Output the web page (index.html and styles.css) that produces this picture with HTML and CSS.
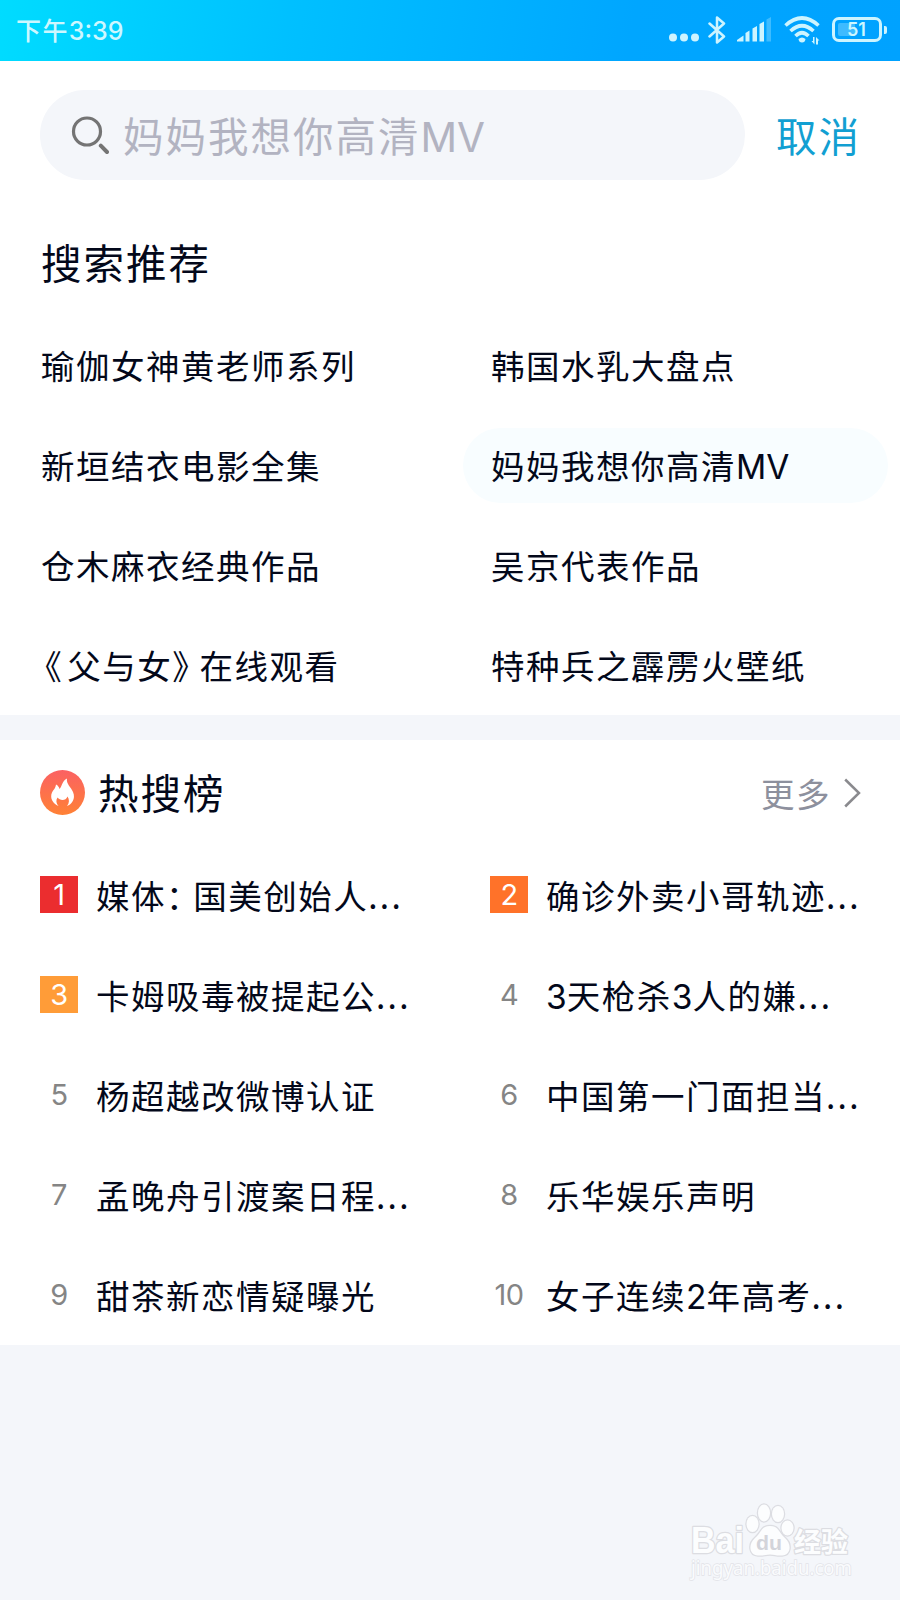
FILE: index.html
```html
<!DOCTYPE html>
<html lang="zh-CN">
<head>
  <meta charset="UTF-8" />
  <title>搜索</title>
  <meta name="viewport" content="width=device-width, initial-scale=1.0" />
  <link rel="stylesheet" href="styles.css">
</head>
<body>

  <div class="status-bar">
    <div class="time">下午<span class="en">3:39</span></div>
    <div class="status-icons">
      <svg class="ic-dots" width="30" height="30" viewBox="0 0 30 30">
        <circle cx="4" cy="22.500" r="4"/><circle cx="15" cy="22.500" r="4"/><circle cx="26" cy="22.500" r="4"/>
      </svg>
      <svg class="ic-bt" width="18" height="30" viewBox="0 0 18 30">
        <path d="M1.500 8.500 L16 21.500 L9 27.500 V2.500 L16 8.500 L1.500 21.500" fill="none" stroke="#cdf4ff" stroke-width="2.500" stroke-linejoin="round" stroke-linecap="round"/>
      </svg>
      <svg class="ic-signal" width="34" height="30" viewBox="0 0 34 30">
        <path d="M0 26.500 V25 L6.500 20.500 V26.500Z"/>
        <path d="M8.500 26.500 V18 L12.500 15.500 V26.500Z"/>
        <path d="M15.500 26.500 V13.500 L20 11 V26.500Z"/>
        <path d="M22.500 26.500 V9 L27 6.500 V26.500Z"/>
        <path d="M29.500 26.500 V4.500 L34 2 V26.500Z" opacity=".3"/>
      </svg>
      <svg class="ic-wifi" width="36" height="30" viewBox="0 0 36 30">
        <g fill="none" stroke="#cdf4ff" stroke-width="3.600">
          <path d="M1.500 10.500 Q18 -4.500 34.500 10.500"/>
          <path d="M6.500 16 Q18 5.500 29.500 16"/>
          <path d="M11.500 21 Q18 14.500 24.500 21"/>
        </g>
        <path d="M14.500 24 Q18 21 21.500 24 Q21 27.500 18 27.500 Q15 27.500 14.500 24Z"/>
        <path d="M30.500 22 V29.500 L27.500 26 H29 V22Z M32 29.500 V22 L35.500 25.500 H34 V29.500Z"/>
      </svg>
      <div class="battery"><span class="en">51</span></div>
    </div>
  </div>

  <div class="panel">
    <div class="search-row">
      <div class="search-box">
        <svg width="38" height="40" viewBox="0 0 38 40">
          <g fill="none" stroke="#747474">
            <circle cx="16" cy="16.500" r="13.500" stroke-width="3.200"/>
            <path d="M29.800 30.700 L36 37" stroke-width="4" stroke-linecap="round"/>
          </g>
        </svg>
        <div class="keyword">妈妈我想你高清<span class="en">MV</span></div>
      </div>
      <div class="cancel">取消</div>
    </div>

    <div class="title">搜索推荐</div>
    <div class="grid">
      <div class="item"><p>瑜伽女神黄老师系列</p></div>
      <div class="item"><p>韩国水乳大盘点</p></div>
      <div class="item"><p>新垣结衣电影全集</p></div>
      <div class="item active"><p>妈妈我想你高清<span class="en">MV</span></p></div>
      <div class="item"><p>仓木麻衣经典作品</p></div>
      <div class="item"><p>吴京代表作品</p></div>
      <div class="item"><p><span class="open">《</span>父与女<span class="close">》</span>在线观看</p></div>
      <div class="item"><p>特种兵之霹雳火壁纸</p></div>
    </div>
  </div>

  <div class="panel hot">
    <div class="hot-header">
      <svg class="fire" width="45" height="45" viewBox="0 0 45 45">
        <defs>
          <linearGradient id="fireBg" x1="0" y1="0" x2="0" y2="1">
            <stop offset="0" stop-color="#fb6163"/>
            <stop offset="1" stop-color="#ff8135"/>
          </linearGradient>
        </defs>
        <circle cx="22.500" cy="22.500" r="22.500" fill="url(#fireBg)"/>
        <path fill="#fff" d="M18.500 36 C13 34 9.500 28 12 22.500 C13.500 19.500 15.500 18.500 16 14.500 C18 15.500 19 17 19.500 19 C22 16.500 22 11 27 8.500 C26 14 31 17 33 22 C36 29 31.500 34.500 27 36 C29.500 33 29.500 29.500 27.500 26.500 C26 31 20 31 17.500 27.500 C15.800 30 16 33.500 18.500 36Z"/>
      </svg>
      <div class="title">热搜榜</div>
      <div class="more">更多</div>
      <svg width="17" height="30" viewBox="0 0 17 30">
        <path d="M1.200 1.500 L15 15 L1.200 28.500" fill="none" stroke="#8a8a8e" stroke-width="2.500"/>
      </svg>
    </div>
    <div class="grid">
      <div class="item"><b class="rank r1">1</b><p>媒体<span class="colon">：</span>国美创始人<i>...</i></p></div>
      <div class="item"><b class="rank r2">2</b><p>确诊外卖小哥轨迹<i>...</i></p></div>
      <div class="item"><b class="rank r3">3</b><p>卡姆吸毒被提起公<i>...</i></p></div>
      <div class="item"><b class="rank">4</b><p><span class="en">3</span>天枪杀<span class="en">3</span>人的嫌<i>...</i></p></div>
      <div class="item"><b class="rank">5</b><p>杨超越改微博认证</p></div>
      <div class="item"><b class="rank">6</b><p>中国第一门面担当<i>...</i></p></div>
      <div class="item"><b class="rank">7</b><p>孟晚舟引渡案日程<i>...</i></p></div>
      <div class="item"><b class="rank">8</b><p>乐华娱乐声明</p></div>
      <div class="item"><b class="rank">9</b><p>甜茶新恋情疑曝光</p></div>
      <div class="item"><b class="rank">10</b><p>女子连续<span class="en">2</span>年高考<i>...</i></p></div>
    </div>
  </div>

  <svg class="watermark" width="180" height="100" viewBox="0 0 180 100">
    <g fill="#fcfdfe" stroke="#dcdde2" stroke-width="2.500" paint-order="stroke" stroke-linejoin="round">
      <text class="wm-bai" x="10" y="62" textLength="53" lengthAdjust="spacingAndGlyphs">Bai</text>
      <ellipse cx="71.500" cy="33" rx="6" ry="8"/>
      <ellipse cx="83" cy="22" rx="6" ry="8.500"/>
      <ellipse cx="97" cy="23" rx="6" ry="8"/>
      <ellipse cx="106.500" cy="37" rx="6" ry="7.500"/>
      <path d="M89 35 C80 35 81 41 74 47 C67 53 68 64 77 64.500 C83 65 84 63.500 89 63.500 C94 63.500 95 65 101 64.500 C110 64 111 53 104 47 C97 41 98 35 89 35Z"/>
      <text class="wm-cjk" x="113" y="61">经验</text>
    </g>
    <text class="wm-du" x="75" y="59" textLength="26" lengthAdjust="spacingAndGlyphs">du</text>
    <text class="wm-url" x="10" y="84" textLength="161" lengthAdjust="spacingAndGlyphs">jingyan.baidu.com</text>
  </svg>

</body>
</html>
```
FILE: styles.css
```css
body {
  position: relative;
  min-height: 1600px;
  margin: 0;
  background-color: #f4f6fa;
  color: #03081a;
  font-family: "Noto Sans CJK SC", sans-serif;
}
.en {
  font-family: Inter, sans-serif;
  letter-spacing: 0;
  line-height: 0;
}

.status-bar {
  display: flex;
  justify-content: space-between;
  box-sizing: border-box;
  height: 61px;
  padding: 0 14px 0 16px;
  background: linear-gradient(100deg, #00dcff 0%, #00c0ff 32%, #00a6ff 70%, #00a2ff 100%);
  color: #cdf7ff;
}
.time {
  font-size: 25px;
  font-weight: 500;
  line-height: 59px;
  letter-spacing: 1.4px;
}
.status-icons {
  display: flex;
  align-items: flex-start;
  padding-top: 15px;
}
.status-icons svg {
  fill: #cdf4ff;
}
.ic-bt {
  margin-left: 9px;
}
.ic-signal {
  margin-left: 11px;
}
.ic-wifi {
  margin-left: 13px;
}
.battery {
  display: flex;
  position: relative;
  box-sizing: border-box;
  width: 50px;
  height: 25px;
  margin: 2px 4px 0 12px;
  padding: 3px;
  border: 3px solid #cdf4ff;
  border-radius: 7px;
}
.battery::before {
  content: "";
  width: 17px;
  height: 13px;
  border-radius: 2px;
  background: rgba(205, 244, 255, 0.3);
}
.battery::after {
  content: "";
  position: absolute;
  top: 6px;
  right: -8px;
  width: 3px;
  height: 8px;
  border-radius: 0 2px 2px 0;
  background: #cdf4ff;
}
.battery span {
  margin-left: -8px;
  font-size: 18px;
  font-weight: 600;
  line-height: 13px;
}

.panel {
  background-color: #fff;
  height: 654px;
}
.search-row {
  display: flex;
  align-items: center;
  height: 90px;
  padding: 29px 40px 0;
}
.search-box {
  display: flex;
  flex-shrink: 0;
  align-items: center;
  box-sizing: border-box;
  width: 705px;
  height: 90px;
  padding-left: 31px;
  border-radius: 45px;
  background-color: #f4f6fa;
  color: #b2b3c1;
  font-size: 40.5px;
  letter-spacing: 2px;
}
.keyword {
  margin: -2px 0 0 14px;
}
.cancel {
  margin: -2px 0 0 31px;
  color: #129fd2;
  font-size: 40.5px;
  letter-spacing: 2px;
  white-space: nowrap;
}

.title {
  font-size: 40.5px;
  letter-spacing: 2px;
}
.panel > .title {
  height: 135px;
  padding-left: 41px;
  line-height: 163px;
}

.grid {
  display: grid;
  grid-template-columns: 450px 450px;
  grid-auto-rows: 100px;
}
.item {
  display: flex;
  align-items: center;
  padding-left: 41px;
  font-size: 33.5px;
  letter-spacing: 1.5px;
  white-space: nowrap;
}
.item p {
  margin: 0;
  line-height: 50px;
}
.item.active {
  align-self: center;
  box-sizing: border-box;
  height: 75px;
  margin: 0 12px 0 13px;
  padding: 0 0 0 28px;
  border-radius: 38px;
  background-color: #f8fdff;
}
.item i {
  font-style: normal;
  letter-spacing: 2.3px;
}
/* half-width punctuation */
.open, .close, .colon {
  font-feature-settings: "halt";
}
.open {
  padding: 0 4px 0 4px;
}
.close, .colon {
  padding-right: 9px;
}

.hot {
  height: 605px;
  margin-top: 25px;
}
.hot-header {
  display: flex;
  align-items: center;
  height: 105px;
  padding: 0 39px 0 40px;
}
.hot-header .title {
  margin: -3px 0 0 13px;
}
.more {
  margin: -1px 13px 0 auto;
  color: #8d909d;
  font-size: 33.5px;
  letter-spacing: 1.5px;
}
.hot .item {
  padding-left: 40px;
}
.rank {
  width: 38px;
  height: 37px;
  margin: -1px 18px 0 0;
  color: #858585;
  font-family: Inter, sans-serif;
  font-size: 29px;
  font-weight: 400;
  line-height: 38px;
  letter-spacing: -0.5px;
  text-align: center;
}
.r1, .r2, .r3 {
  color: #fff;
}
.r1 {
  background-color: #eb2d2f;
}
.r2 {
  background-color: #ff7229;
}
.r3 {
  background-color: #ff9c38;
}

.watermark {
  position: absolute;
  left: 681px;
  top: 1491px;
}
.wm-bai {
  font: bold 36px "Liberation Sans", sans-serif;
}
.wm-cjk {
  font: bold 27px "Noto Sans CJK SC", sans-serif;
}
.wm-du {
  fill: #d3d4da;
  font: bold 21px "Liberation Sans", sans-serif;
}
.wm-url {
  fill: #fafbfd;
  stroke: #e2e3e8;
  stroke-width: 1.5px;
  paint-order: stroke;
  font: 20px "Noto Sans", sans-serif;
}
```
